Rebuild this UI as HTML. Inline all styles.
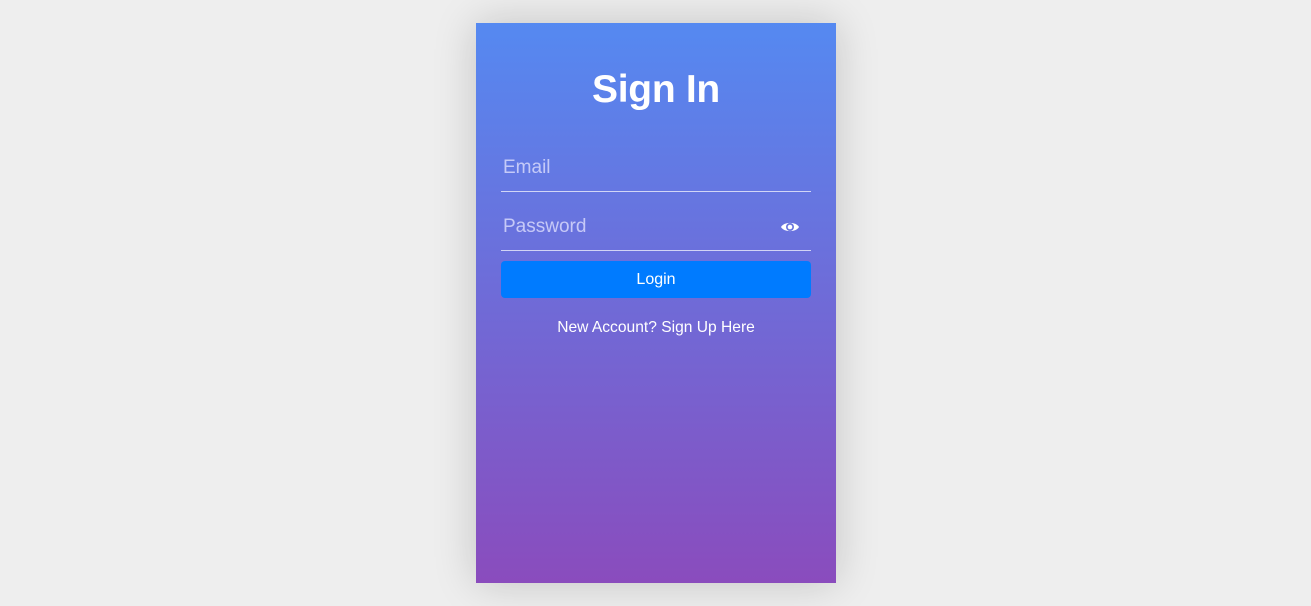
<!DOCTYPE html>
<html><head><style>
body{margin:0;width:1311px;height:606px;background:#eeeeee;font-family:"Liberation Sans",sans-serif;position:relative;overflow:hidden}
.card{position:absolute;left:476px;top:23px;width:360px;height:560px;background:linear-gradient(#5589f1,#8a4cbd);box-shadow:0 0 40px rgba(0,0,0,0.18)}
h1{position:absolute;top:44px;left:0;width:100%;margin:0;text-align:center;color:#fff;font-size:39px;font-weight:bold;line-height:46px;letter-spacing:-0.3px}
.f{position:absolute;left:25px;width:310px;border-bottom:1px solid rgba(255,255,255,0.7);color:rgba(230,230,255,0.75);font-size:19px}
.btn{position:absolute;left:25px;top:238px;width:310px;height:37px;background:#007bff;border-radius:4px;color:#fff;font-size:16px;text-align:center;line-height:38px}
.lnk{position:absolute;top:296px;width:100%;text-align:center;color:#fff;font-size:15.6px}
</style></head><body>
<div class="card">
<h1>Sign In</h1>
<div class="f" style="top:131px;height:37px;"><span style="position:absolute;left:2px;top:3px">Email</span></div>
<div class="f" style="top:190px;height:37px;"><span style="position:absolute;left:2px;top:3px">Password</span>
<svg style="position:absolute;left:279px;top:7px" width="20" height="14" viewBox="0 0 20 14"><path d="M1 7C4 1.5 16 1.5 19 7C16 12.5 4 12.5 1 7Z" fill="#fff"/><circle cx="10" cy="7" r="4" fill="#6a76de"/><circle cx="10" cy="7" r="2.3" fill="#fff"/></svg></div>
<div class="btn">Login</div>
<div class="lnk">New Account? Sign Up Here</div>
</div>
</body></html>
